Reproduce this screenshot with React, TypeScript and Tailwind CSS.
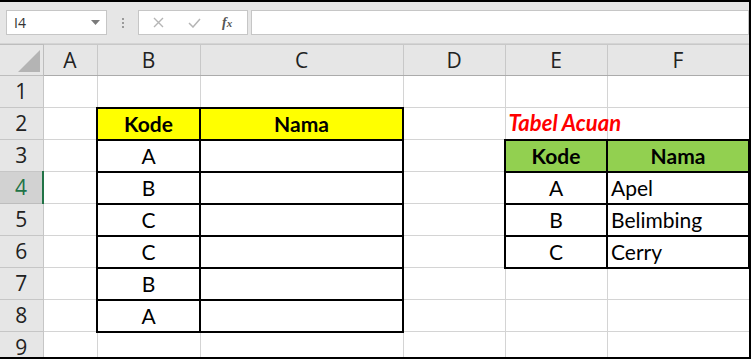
import React from 'react';

const cols = [43, 54, 103, 203, 102, 102, 142];
const letters = ['A', 'B', 'C', 'D', 'E', 'F'];

type Cell = { text?: string; cls?: string };

const box = 'border-2 border-black';
const mid = `${box} text-center`;
const left = `${box} pl-[3px]`;

// rows 1..9, columns A..F
const rows: Cell[][] = [
  [{}, {}, {}, {}, {}, {}],
  [
    {},
    { text: 'Kode', cls: `${mid} bg-[#ffff00] font-bold` },
    { text: 'Nama', cls: `${mid} bg-[#ffff00] font-bold` },
    {},
    { text: 'Tabel Acuan', cls: 'font-bold italic !text-[#ff0000] !text-[22px] whitespace-nowrap overflow-visible pl-[3px]' },
    {},
  ],
  [
    {},
    { text: 'A', cls: mid },
    { cls: box },
    {},
    { text: 'Kode', cls: `${mid} bg-[#92d050] font-bold` },
    { text: 'Nama', cls: `${mid} bg-[#92d050] font-bold` },
  ],
  [{}, { text: 'B', cls: mid }, { cls: box }, {}, { text: 'A', cls: mid }, { text: 'Apel', cls: left }],
  [{}, { text: 'C', cls: mid }, { cls: box }, {}, { text: 'B', cls: mid }, { text: 'Belimbing', cls: left }],
  [{}, { text: 'C', cls: mid }, { cls: box }, {}, { text: 'C', cls: mid }, { text: 'Cerry', cls: left }],
  [{}, { text: 'B', cls: mid }, { cls: box }, {}, {}, {}],
  [{}, { text: 'A', cls: mid }, { cls: box }, {}, {}, {}],
  [{}, {}, {}, {}, {}, {}],
];

const FormulaBar = () => (
  <div className="h-[42px] bg-[#e6e6e6] flex items-start pt-[8px] pl-[6px] border-b border-[#d4d4d4]">
    <div className="w-[101px] h-[25px] bg-white border border-[#c6c6c6] flex items-center justify-between pl-[7px] pr-[6px]">
      <span className="text-[14px] text-[#333] font-['Open_Sans',sans-serif]">I4</span>
      <svg width="9" height="5" viewBox="0 0 9 5">
        <path d="M0 0 L9 0 L4.5 5 Z" fill="#7a7a7a" />
      </svg>
    </div>
    <div className="w-[31px] h-[25px] flex flex-col items-center justify-center gap-[2px]">
      <span className="w-[2px] h-[2px] bg-[#9a9a9a]" />
      <span className="w-[2px] h-[2px] bg-[#9a9a9a]" />
      <span className="w-[2px] h-[2px] bg-[#9a9a9a]" />
    </div>
    <div className="w-[110px] h-[25px] bg-white border border-[#c6c6c6] flex items-center">
      <svg className="ml-[14px]" width="11" height="11" viewBox="0 0 11 11">
        <path d="M1 1 L10 10 M10 1 L1 10" stroke="#b5b5b5" strokeWidth="1.4" />
      </svg>
      <svg className="ml-[24px]" width="13" height="10" viewBox="0 0 13 10">
        <path d="M1 5 L5 9 L12 1" stroke="#b5b5b5" strokeWidth="1.5" fill="none" />
      </svg>
      <span className="ml-[21px] text-[14px] italic text-[#555] font-['Liberation_Serif',serif] font-bold">
        f<span className="text-[11px]">x</span>
      </span>
    </div>
    <div className="ml-[3px] flex-1 h-[25px] bg-white border border-[#c6c6c6]" />
  </div>
);

export default function App() {
  return (
    <div className="w-[751px] h-[359px] overflow-hidden bg-white border-t-2 border-r-2 border-b-2 border-black">
      <FormulaBar />
      <table className="table-fixed border-collapse w-[749px]">
        <colgroup>
          {cols.map((w, i) => (
            <col key={i} style={{ width: w }} />
          ))}
        </colgroup>
        <thead>
          <tr>
            <th className="h-[31px] p-0 bg-[#e6e6e6] border border-[#bdbdbd] border-l-0 relative">
              <svg className="absolute right-[3px] bottom-[3px]" width="22" height="22" viewBox="0 0 22 22">
                <path d="M22 0 L22 22 L0 22 Z" fill="#b4b4b4" />
              </svg>
            </th>
            {letters.map((l) => (
              <th
                key={l}
                className="h-[31px] p-0 bg-[#e6e6e6] border border-[#c8c8c8] border-b-[#ababab] font-normal text-[21px] text-[#222] font-['Open_Sans',sans-serif] leading-none"
              >
                {l}
              </th>
            ))}
          </tr>
        </thead>
        <tbody>
          {rows.map((row, r) => {
            const sel = r === 3;
            return (
              <tr key={r}>
                <td
                  className={`h-[32px] p-0 text-center text-[21px] leading-none font-['Open_Sans',sans-serif] border border-l-0 ${
                    sel
                      ? 'bg-[#d2d2d2] text-[#217346] border-[#bdbdbd] border-r-2 border-r-[#217346]'
                      : 'bg-[#e6e6e6] text-[#222] border-[#c6c6c6]'
                  }`}
                >
                  {r + 1}
                </td>
                {row.map((c, i) => (
                  <td
                    key={i}
                    className={`h-[32px] p-0 text-[21px] text-black leading-none font-['Lato',sans-serif] align-middle border border-[#d4d4d4] ${c.cls ?? ''}`}
                  >
                    {c.text ?? ''}
                  </td>
                ))}
              </tr>
            );
          })}
        </tbody>
      </table>
    </div>
  );
}
